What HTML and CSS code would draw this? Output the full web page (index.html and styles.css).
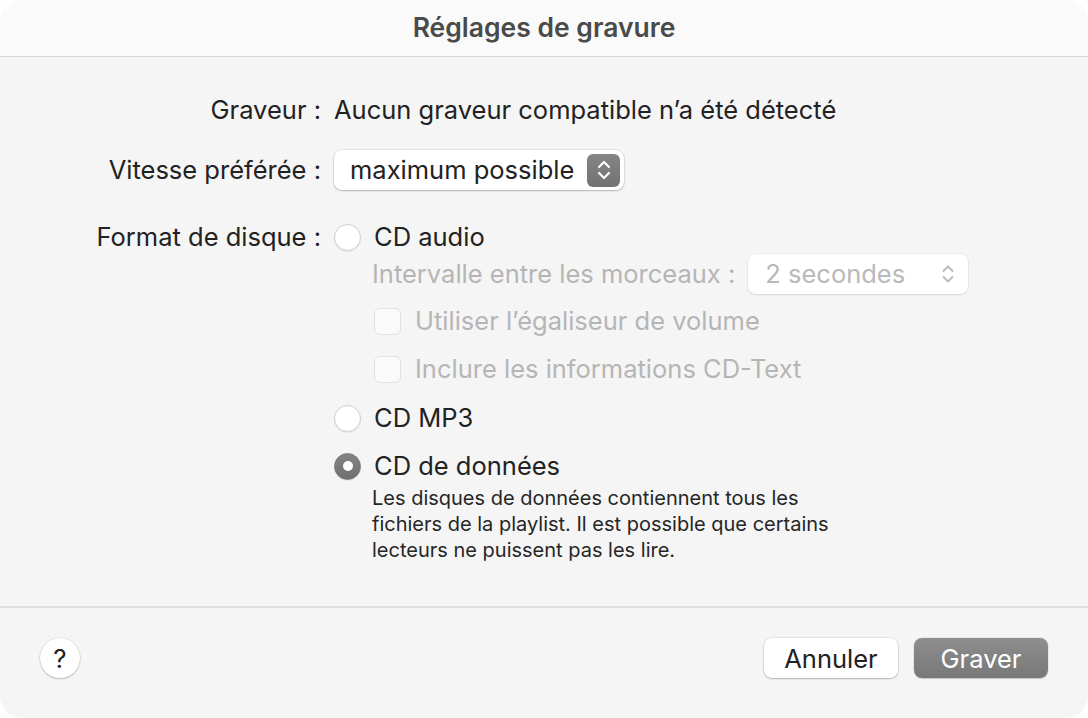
FILE: index.html
```html
<!DOCTYPE html>
<html lang="fr">
<head>
<meta charset="utf-8">
<title>Réglages de gravure</title>
<link rel="stylesheet" href="styles.css">
</head>
<body>
<div class="window">
  <div class="titlebar"><span class="title">Réglages de gravure</span></div>
  <div class="content">
    <div class="form">
      <div class="label row1">Graveur :</div>
      <div class="value row1">Aucun graveur compatible n’a été détecté</div>

      <div class="label row2">Vitesse préférée :</div>
      <div class="value row2">
        <div class="popup">
          <span class="popup-text">maximum possible</span>
          <span class="stepper">
            <svg width="16" height="24" viewBox="0 0 16 24"><path d="M3 9 L8 4 L13 9 M3 15 L8 20 L13 15" fill="none" stroke="#fff" stroke-width="2.2" stroke-linecap="round" stroke-linejoin="round"/></svg>
          </span>
        </div>
      </div>

      <div class="label row3">Format de disque :</div>
      <div class="value row3 group">
        <div class="radio-row r-audio"><span class="radio"></span><span>CD audio</span></div>
        <div class="sub interval">
          <span class="dim">Intervalle entre les morceaux :</span>
          <div class="popup disabled">
            <span class="popup-text">2 secondes</span>
            <span class="stepper plain">
              <svg width="16" height="24" viewBox="0 0 16 24"><path d="M3.5 9 L8 4.5 L12.5 9 M3.5 15 L8 19.5 L12.5 15" fill="none" stroke="#bdbdbd" stroke-width="2" stroke-linecap="round" stroke-linejoin="round"/></svg>
            </span>
          </div>
        </div>
        <div class="sub check-row c1"><span class="checkbox"></span><span class="dim">Utiliser l’égaliseur de volume</span></div>
        <div class="sub check-row c2"><span class="checkbox"></span><span class="dim">Inclure les informations CD-Text</span></div>
        <div class="radio-row r-mp3"><span class="radio"></span><span>CD MP3</span></div>
        <div class="radio-row r-data"><span class="radio checked"></span><span>CD de données</span></div>
        <p class="sub desc">Les disques de données contiennent tous les<br>fichiers de la playlist. Il est possible que certains<br>lecteurs ne puissent pas les lire.</p>
      </div>
    </div>
  </div>
  <div class="footer">
    <button class="help">?</button>
    <div class="actions">
      <button class="btn">Annuler</button>
      <button class="btn primary">Graver</button>
    </div>
  </div>
</div>
</body>
</html>
```

FILE: styles.css
```css
* { box-sizing: border-box; }
html, body { margin: 0; padding: 0; }
body {
  background: #ffffff;
  font-family: Inter, "Noto Sans", "Liberation Sans", sans-serif;
  color: #222222;
  width: 1088px;
  height: 718px;
  overflow: hidden;
}
.window {
  width: 1088px;
  height: 718px;
  background: #f5f5f5;
  border-radius: 22px;
  overflow: hidden;
  display: flex;
  flex-direction: column;
}
.titlebar {
  height: 57px;
  flex: none;
  background: #fafafa;
  border-bottom: 1px solid #d9d9d9;
  display: flex;
  align-items: center;
  justify-content: center;
}
.title {
  font-size: 26.5px;
  font-weight: 600;
  color: #4a4a4a;
  margin-top: -3px;
}
.content {
  flex: 1;
  padding-top: 33px;
}
.form {
  display: grid;
  grid-template-columns: 321px 1fr;
  column-gap: 13px;
  font-size: 25.5px;
}
.label {
  text-align: right;
  line-height: 40px;
}
.value { line-height: 40px; }
.row1 { grid-row: 1; }
.row2 { grid-row: 2; margin-top: 20px; }
.row3 { grid-row: 3; margin-top: 29px; }
.label.row3 { line-height: 36px; align-self: start; }
.popup {
  display: inline-flex;
  align-items: center;
  justify-content: space-between;
  width: 290px;
  height: 40px;
  padding: 0 4px 0 16px;
  background: #ffffff;
  border-radius: 8px;
  box-shadow: 0 0 0 0.5px rgba(0,0,0,0.12), 0 1px 2px rgba(0,0,0,0.22);
  vertical-align: top;
}
.popup-text { line-height: 40px; }
.stepper {
  width: 33px;
  height: 33px;
  border-radius: 6px;
  background: linear-gradient(#858585, #727272);
  display: flex;
  align-items: center;
  justify-content: center;
}
.stepper.plain { background: none; }
.popup.disabled {
  width: 220px;
  color: #b9b9b9;
  padding-left: 17px;
  box-shadow: 0 0 0 0.5px rgba(0,0,0,0.06), 0 1px 2px rgba(0,0,0,0.1);
}
.group {
  display: flex;
  flex-direction: column;
  align-items: flex-start;
}
.radio-row {
  display: flex;
  align-items: center;
  gap: 13px;
  height: 36px;
  line-height: 36px;
}
.radio {
  width: 27px;
  height: 27px;
  border-radius: 50%;
  background: #ffffff;
  border: 1px solid #cdcdcd;
  box-shadow: 0 1px 1px rgba(0,0,0,0.06);
  flex: none;
  display: flex;
  align-items: center;
  justify-content: center;
}
.radio.checked {
  background: linear-gradient(#838383, #6f6f6f);
  border-color: #767676;
}
.radio.checked::after {
  content: "";
  width: 10px;
  height: 10px;
  border-radius: 50%;
  background: #ffffff;
}
.sub { margin-left: 38px; }
.interval {
  display: flex;
  align-items: center;
  gap: 13px;
  height: 40px;
  margin-top: -1px;
}
.dim { color: #b5b5b5; }
.check-row {
  display: flex;
  align-items: center;
  gap: 14px;
  height: 36px;
  margin-left: 40px;
}
.c1 { margin-top: 9px; }
.c2 { margin-top: 12px; }
.checkbox {
  width: 27px;
  height: 27px;
  border-radius: 6px;
  background: #fafafa;
  border: 1px solid #e2e2e2;
  flex: none;
}
.r-mp3 { margin-top: 13px; }
.r-data { margin-top: 12px; }
.desc {
  margin-top: 1px;
  margin-bottom: 0;
  font-size: 20px;
  line-height: 26px;
  color: #262626;
}
.footer {
  height: 112px;
  flex: none;
  border-top: 2px solid #dedede;
  display: flex;
  align-items: center;
  justify-content: space-between;
  padding: 0 40px 10px 40px;
}
button {
  font-family: Inter, "Noto Sans", "Liberation Sans", sans-serif;
  border: none;
  margin: 0;
  cursor: default;
}
.help {
  width: 40px;
  height: 40px;
  border-radius: 50%;
  background: #ffffff;
  box-shadow: 0 0 0 0.5px rgba(0,0,0,0.1), 0 1px 2px rgba(0,0,0,0.22);
  font-size: 26px;
  color: #222;
  padding: 0;
}
.actions { display: flex; gap: 16px; }
.btn {
  width: 134px;
  height: 40px;
  border-radius: 8px;
  background: #ffffff;
  box-shadow: 0 0 0 0.5px rgba(0,0,0,0.12), 0 1px 2px rgba(0,0,0,0.22);
  font-size: 25.5px;
  color: #222;
  padding: 0;
}
.btn.primary {
  background: linear-gradient(#8e8e8e, #787878);
  color: #ffffff;
  box-shadow: 0 0 0 0.5px rgba(0,0,0,0.1), 0 1px 1px rgba(0,0,0,0.15);
}
```
